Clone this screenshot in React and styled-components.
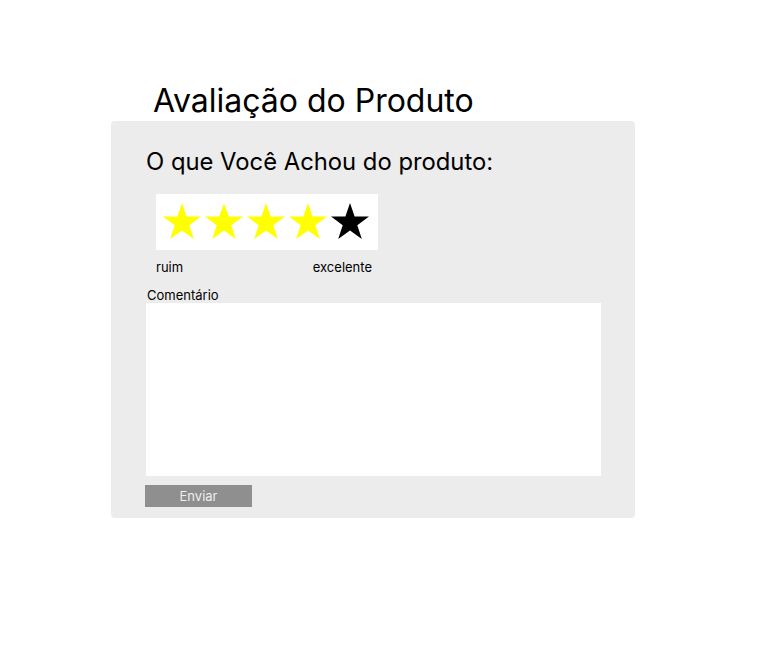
import React from "react";
import styled, { createGlobalStyle } from "styled-components";

const GlobalStyle = createGlobalStyle`
  body {
    margin: 0;
    background: #ffffff;
    font-family: Inter, "Noto Sans", sans-serif;
    color: #000;
  }
`;

const Page = styled.div`
  padding: 82px 0 0 111px;
`;

const Title = styled.h1`
  margin: 0 0 2px 42px;
  font-size: 32px;
  font-weight: 400;
  line-height: 37px;
`;

const Card = styled.div`
  width: 524px;
  height: 397px;
  box-sizing: border-box;
  background: #ececec;
  border-radius: 4px;
  padding: 26px 0 0 35px;
  display: flex;
  flex-direction: column;
`;

const Question = styled.h2`
  margin: 0;
  font-size: 23.8px;
  font-weight: 400;
  line-height: 29px;
`;

const StarBox = styled.div`
  margin: 18px 0 0 10px;
  width: 222px;
  height: 56px;
  background: #fff;
  display: flex;
  align-items: center;
  padding-left: 6px;
  box-sizing: border-box;
  gap: 2px;
`;

const Star = styled.svg`
  width: 40px;
  height: 40px;
  fill: ${({ $on }) => ($on ? "#ffff00" : "#000")};
`;

const Scale = styled.div`
  margin: 9px 0 0 10px;
  width: 216px;
  display: flex;
  justify-content: space-between;
  font-size: 13px;
  line-height: 16px;
`;

const Label = styled.label`
  margin: 12px 0 0 1px;
  font-size: 13px;
  line-height: 16px;
`;

const TextArea = styled.textarea`
  display: block;
  width: 455px;
  height: 173px;
  box-sizing: border-box;
  border: none;
  background: #fff;
  resize: none;
  outline: none;
  font-family: inherit;
`;

const Button = styled.button`
  margin-top: 9px;
  width: 107px;
  height: 22px;
  border: none;
  padding: 0;
  background: #8f8f8f;
  color: #eeeeee;
  font-family: inherit;
  font-size: 13px;
  align-self: flex-start;
  margin-left: -1px;
`;

const StarIcon = ({ on }) => (
  <Star $on={on} viewBox="0 0 40 40">
    <polygon points="20,1 24.6,14.6 39,14.6 27.3,23.2 31.8,37 20,28.6 8.2,37 12.7,23.2 1,14.6 15.4,14.6" />
  </Star>
);

export default function App() {
  const rating = 4;
  return (
    <>
      <GlobalStyle />
      <Page>
        <Title>Avaliação do Produto</Title>
        <Card>
          <Question>O que Você Achou do produto:</Question>
          <StarBox>
            {[1, 2, 3, 4, 5].map((n) => (
              <StarIcon key={n} on={n <= rating} />
            ))}
          </StarBox>
          <Scale>
            <span>ruim</span>
            <span>excelente</span>
          </Scale>
          <Label>Comentário</Label>
          <TextArea />
          <Button>Enviar</Button>
        </Card>
      </Page>
    </>
  );
}
